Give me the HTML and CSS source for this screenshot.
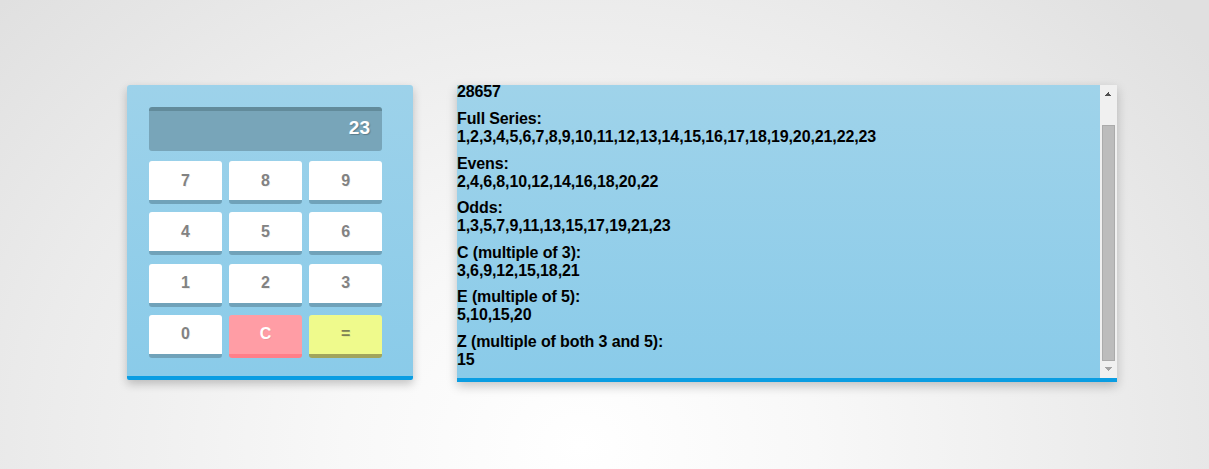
FILE: index.html
```html
<!DOCTYPE html>
<html lang="en">
<head>
<meta charset="utf-8">
<title>Calculator</title>
<link rel="stylesheet" href="styles.css">
</head>
<body>
<div class="stage">
  <div class="calc">
    <div class="display">23</div>
    <div class="keys">
      <button class="key">7</button>
      <button class="key">8</button>
      <button class="key">9</button>
      <button class="key">4</button>
      <button class="key">5</button>
      <button class="key">6</button>
      <button class="key">1</button>
      <button class="key">2</button>
      <button class="key">3</button>
      <button class="key">0</button>
      <button class="key key-clear">C</button>
      <button class="key key-equals">=</button>
    </div>
  </div>
  <div class="output">
    <div class="output-view">
      <div class="output-content">
        <p class="block">28657</p>
        <p class="block">Full Series:<br>1,2,3,4,5,6,7,8,9,10,11,12,13,14,15,16,17,18,19,20,21,22,23</p>
        <p class="block">Evens:<br>2,4,6,8,10,12,14,16,18,20,22</p>
        <p class="block">Odds:<br>1,3,5,7,9,11,13,15,17,19,21,23</p>
        <p class="block">C (multiple of 3):<br>3,6,9,12,15,18,21</p>
        <p class="block">E (multiple of 5):<br>5,10,15,20</p>
        <p class="block">Z (multiple of both 3 and 5):<br>15</p>
      </div>
    </div>
    <div class="scrollbar">
      <div class="sb-btn sb-up"></div>
      <div class="sb-track"><div class="sb-thumb"></div></div>
      <div class="sb-btn sb-down"></div>
    </div>
  </div>
</div>
</body>
</html>
```

FILE: styles.css
```css
html, body {
  margin: 0;
  height: 100%;
}
body {
  background: radial-gradient(ellipse 65% 140% at 48% 95%, #ffffff 0%, #f8f8f8 30%, #ebebeb 70%, #e0e0e0 100%);
  font-family: "Liberation Sans", Arial, sans-serif;
}
.stage {
  display: flex;
  align-items: flex-start;
  gap: 44px;
  padding: 85px 0 0 127px;
}
.calc {
  width: 233px;
  padding: 22px 31px 18px 22px;
  background: linear-gradient(#9dd2ea, #8acbe9);
  border-bottom: 4px solid #0a9de2;
  border-radius: 3px 3px 2px 2px;
  box-shadow: 0 4px 10px rgba(0, 0, 0, 0.22);
}
.display {
  height: 34px;
  padding: 0 12px 6px;
  border-top: 4px solid #628b9b;
  border-radius: 3px;
  background: #78a5b9;
  color: #fff;
  font-weight: bold;
  font-size: 19px;
  line-height: 34px;
  text-align: right;
  text-shadow: 1px 1px 1px rgba(0, 0, 0, 0.25);
}
.keys {
  display: grid;
  grid-template-columns: repeat(3, 1fr);
  column-gap: 7.5px;
  row-gap: 8.3px;
  margin-top: 10px;
}
.key {
  height: 43px;
  margin: 0;
  padding: 0;
  border: 0;
  border-bottom: 4px solid #70a2b9;
  border-radius: 3px;
  background: #fff;
  color: #828282;
  font-family: "Liberation Sans", Arial, sans-serif;
  font-weight: bold;
  font-size: 16px;
  text-shadow: 1px 1px 0 rgba(0, 0, 0, 0.06);
}
.key-clear {
  background: #ff9da5;
  border-bottom-color: #ff7f89;
  color: #fff;
}
.key-equals {
  background: #effa8c;
  border-bottom-color: #a1a45c;
  color: #7d7f55;
}
.output {
  display: flex;
  width: 660px;
  height: 293px;
  border-bottom: 4px solid #0a9de2;
  box-shadow: 0 4px 10px rgba(0, 0, 0, 0.22);
}
.output-view {
  flex: 1;
  display: flex;
  flex-direction: column;
  justify-content: flex-end;
  overflow: hidden;
  background: linear-gradient(#9fd3ea, #8acbe9);
}
.output-content {
  padding-bottom: 0.4px;
}
.block {
  margin: 0 0 8.6px;
  color: #000;
  font-weight: bold;
  font-size: 16px;
  letter-spacing: -0.12px;
}
.scrollbar {
  width: 17px;
  display: flex;
  flex-direction: column;
  background: #f0f0f0;
}
.sb-btn {
  height: 17px;
}
.sb-up {
  background:
    linear-gradient(to bottom right, transparent 50%, #505050 50%) 5px 7px / 4px 4px no-repeat,
    linear-gradient(to bottom left, transparent 50%, #505050 50%) 8px 7px / 4px 4px no-repeat;
}
.sb-down {
  background:
    linear-gradient(to top right, transparent 50%, #a3a3a3 50%) 5px 6px / 4px 4px no-repeat,
    linear-gradient(to top left, transparent 50%, #a3a3a3 50%) 8px 6px / 4px 4px no-repeat;
}
.sb-track {
  flex: 1;
  display: flex;
  flex-direction: column;
  justify-content: flex-end;
  padding: 0 2px;
}
.sb-thumb {
  height: 234px;
  background: #bcbcbc;
  border: 1px solid #ababab;
}
```
